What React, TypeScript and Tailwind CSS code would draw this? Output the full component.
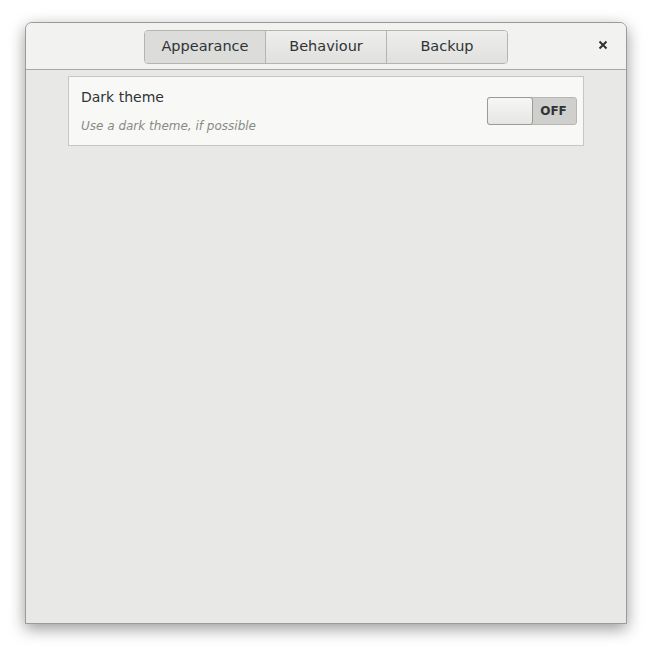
import React, { useState } from 'react';

const tabs = ['Appearance', 'Behaviour', 'Backup'];

export default function App() {
  const [active, setActive] = useState(0);
  const [dark, setDark] = useState(false);

  return (
    <div
      className="w-[652px] h-[652px] bg-white pt-[22px] pl-[25px]"
      style={{ fontFamily: '"DejaVu Sans", sans-serif' }}
    >
      <div className="w-[602px] h-[602px] flex flex-col rounded-t-[7px] border border-[#9a9a98] bg-[#e8e8e7] shadow-[0_5px_16px_rgba(0,0,0,0.4)] overflow-hidden">
        {/* Header bar */}
        <div className="h-[47px] shrink-0 flex items-center bg-[#f2f2f1] border-b border-[#a8a8a5] relative">
          <div className="flex ml-[118px] mt-[1px] h-[34px] rounded-[4px] border border-[#b4b4b1] overflow-hidden">
            {tabs.map((t, i) => (
              <button
                key={t}
                onClick={() => setActive(i)}
                className={
                  i === active
                    ? 'w-[120px] text-[14.5px] text-[#2e3436] bg-[#dcdcda]'
                    : 'w-[121px] text-[14.5px] text-[#2e3436] bg-gradient-to-b from-[#eeeeec] to-[#e0e0de] border-l border-[#b4b4b1]'
                }
              >
                {t}
              </button>
            ))}
          </div>
          <button className="absolute right-[15px] top-[14px] w-[16px] h-[16px] flex items-center justify-center">
            <svg width="10" height="10" viewBox="0 0 10 10">
              <path d="M1.5 1.5 L8.5 8.5 M8.5 1.5 L1.5 8.5" stroke="#2e3436" strokeWidth="2" />
            </svg>
          </button>
        </div>

        {/* Content */}
        <div className="flex-1 pt-[6px] pl-[42px]">
          <div className="w-[516px] h-[70px] bg-[#f8f8f7] border border-[#c6c6c3] flex items-center justify-between pl-[12px] pr-[6px]">
            <div className="flex flex-col">
              <span className="text-[14px] text-[#2e3436] leading-[18px] -mt-[1px]">Dark theme</span>
              <span className="text-[12px] italic text-[#888a85] mt-[12px] leading-[16px]">
                Use a dark theme, if possible
              </span>
            </div>
            <button
              onClick={() => setDark(!dark)}
              className="w-[90px] h-[28px] rounded-[3px] border border-[#b6b6b3] bg-[#cfcfcd] flex items-center mb-[1px]"
            >
              <span className="w-[46px] h-[28px] -ml-px -my-px rounded-[3px] border border-[#9b9b98] bg-gradient-to-b from-[#f6f6f5] to-[#e6e6e4]" />
              <span className="flex-1 text-center text-[12px] font-bold text-[#2e3436] pr-[2px]">OFF</span>
            </button>
          </div>
        </div>
      </div>
    </div>
  );
}
